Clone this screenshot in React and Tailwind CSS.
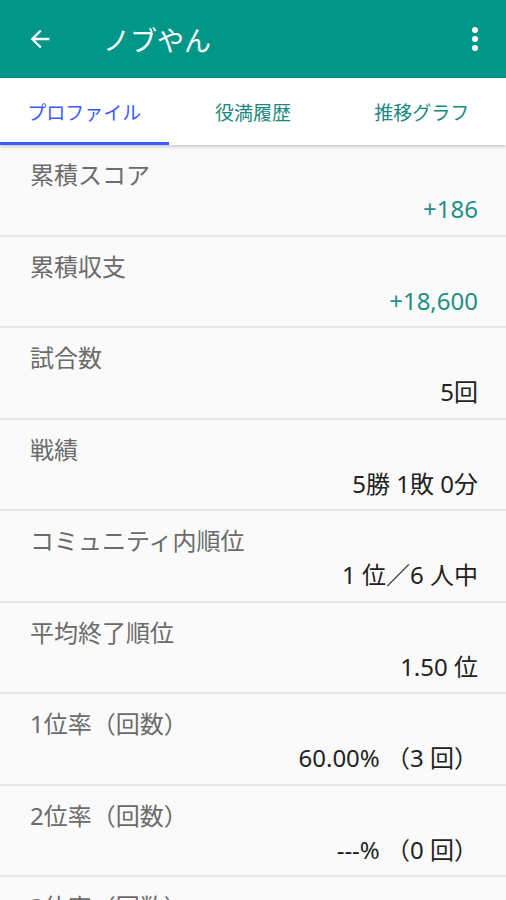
import React from "react";

const rows = [
  { label: "累積スコア", value: "+186", accent: true },
  { label: "累積収支", value: "+18,600", accent: true },
  { label: "試合数", value: "5回" },
  { label: "戦績", value: "5勝 1敗 0分" },
  { label: "コミュニティ内順位", value: "1 位／6 人中" },
  { label: "平均終了順位", value: "1.50 位" },
  { label: "1位率（回数）", value: "60.00% （3 回）" },
  { label: "2位率（回数）", value: "---% （0 回）" },
  { label: "3位率（回数）", value: "20.00% （1 回）" },
];

const tabs = ["プロファイル", "役満履歴", "推移グラフ"];

const StatRow = ({ label, value, accent }) => (
  <div className="flex flex-col shrink-0 h-[91.5px] pt-[15px] pl-[30px] pr-[28px] border-b-2 border-[#e6e6e6]">
    <div className="text-[24px] leading-[30px] text-[#6b6b6b]">{label}</div>
    <div
      className={`mt-[4px] text-[24px] leading-[30px] text-right ${
        accent ? "text-[#1e8f86]" : "text-[#222222]"
      }`}
    >
      {value}
    </div>
  </div>
);

export default function App() {
  return (
    <div
      className="w-[506px] h-[900px] overflow-hidden bg-[#fafafa] flex flex-col"
      style={{ fontFamily: '"Noto Sans", "Noto Sans CJK JP", sans-serif' }}
    >
      <div className="h-[78px] shrink-0 bg-[#009688] flex items-center pl-[26px] pr-[28px] text-white">
        <svg width="28" height="28" viewBox="0 0 24 24" fill="none">
          <path
            d="M20 11H7.83l5.59-5.59L12 4l-8 8 8 8 1.41-1.41L7.83 13H20v-2z"
            fill="white"
          />
        </svg>
        <div className="ml-[49px] text-[27px] leading-none pt-[3px]">ノブやん</div>
        <div className="ml-auto flex flex-col gap-[3px] items-center">
          <span className="w-[6px] h-[6px] rounded-full bg-white" />
          <span className="w-[6px] h-[6px] rounded-full bg-white" />
          <span className="w-[6px] h-[6px] rounded-full bg-white" />
        </div>
      </div>
      <div className="h-[67px] shrink-0 bg-white flex relative z-10 shadow-[0_2px_3px_rgba(0,0,0,0.18)]">
        {tabs.map((t, i) => (
          <div
            key={t}
            className={`flex-1 flex items-center justify-center pt-[6px] text-[19px] border-b-[3px] ${
              i === 0
                ? "text-[#3d5afe] border-[#3d5afe]"
                : "text-[#17897e] border-transparent"
            }`}
          >
            {t}
          </div>
        ))}
      </div>
      <div className="flex flex-col">
        {rows.map((r) => (
          <StatRow key={r.label} {...r} />
        ))}
      </div>
    </div>
  );
}
